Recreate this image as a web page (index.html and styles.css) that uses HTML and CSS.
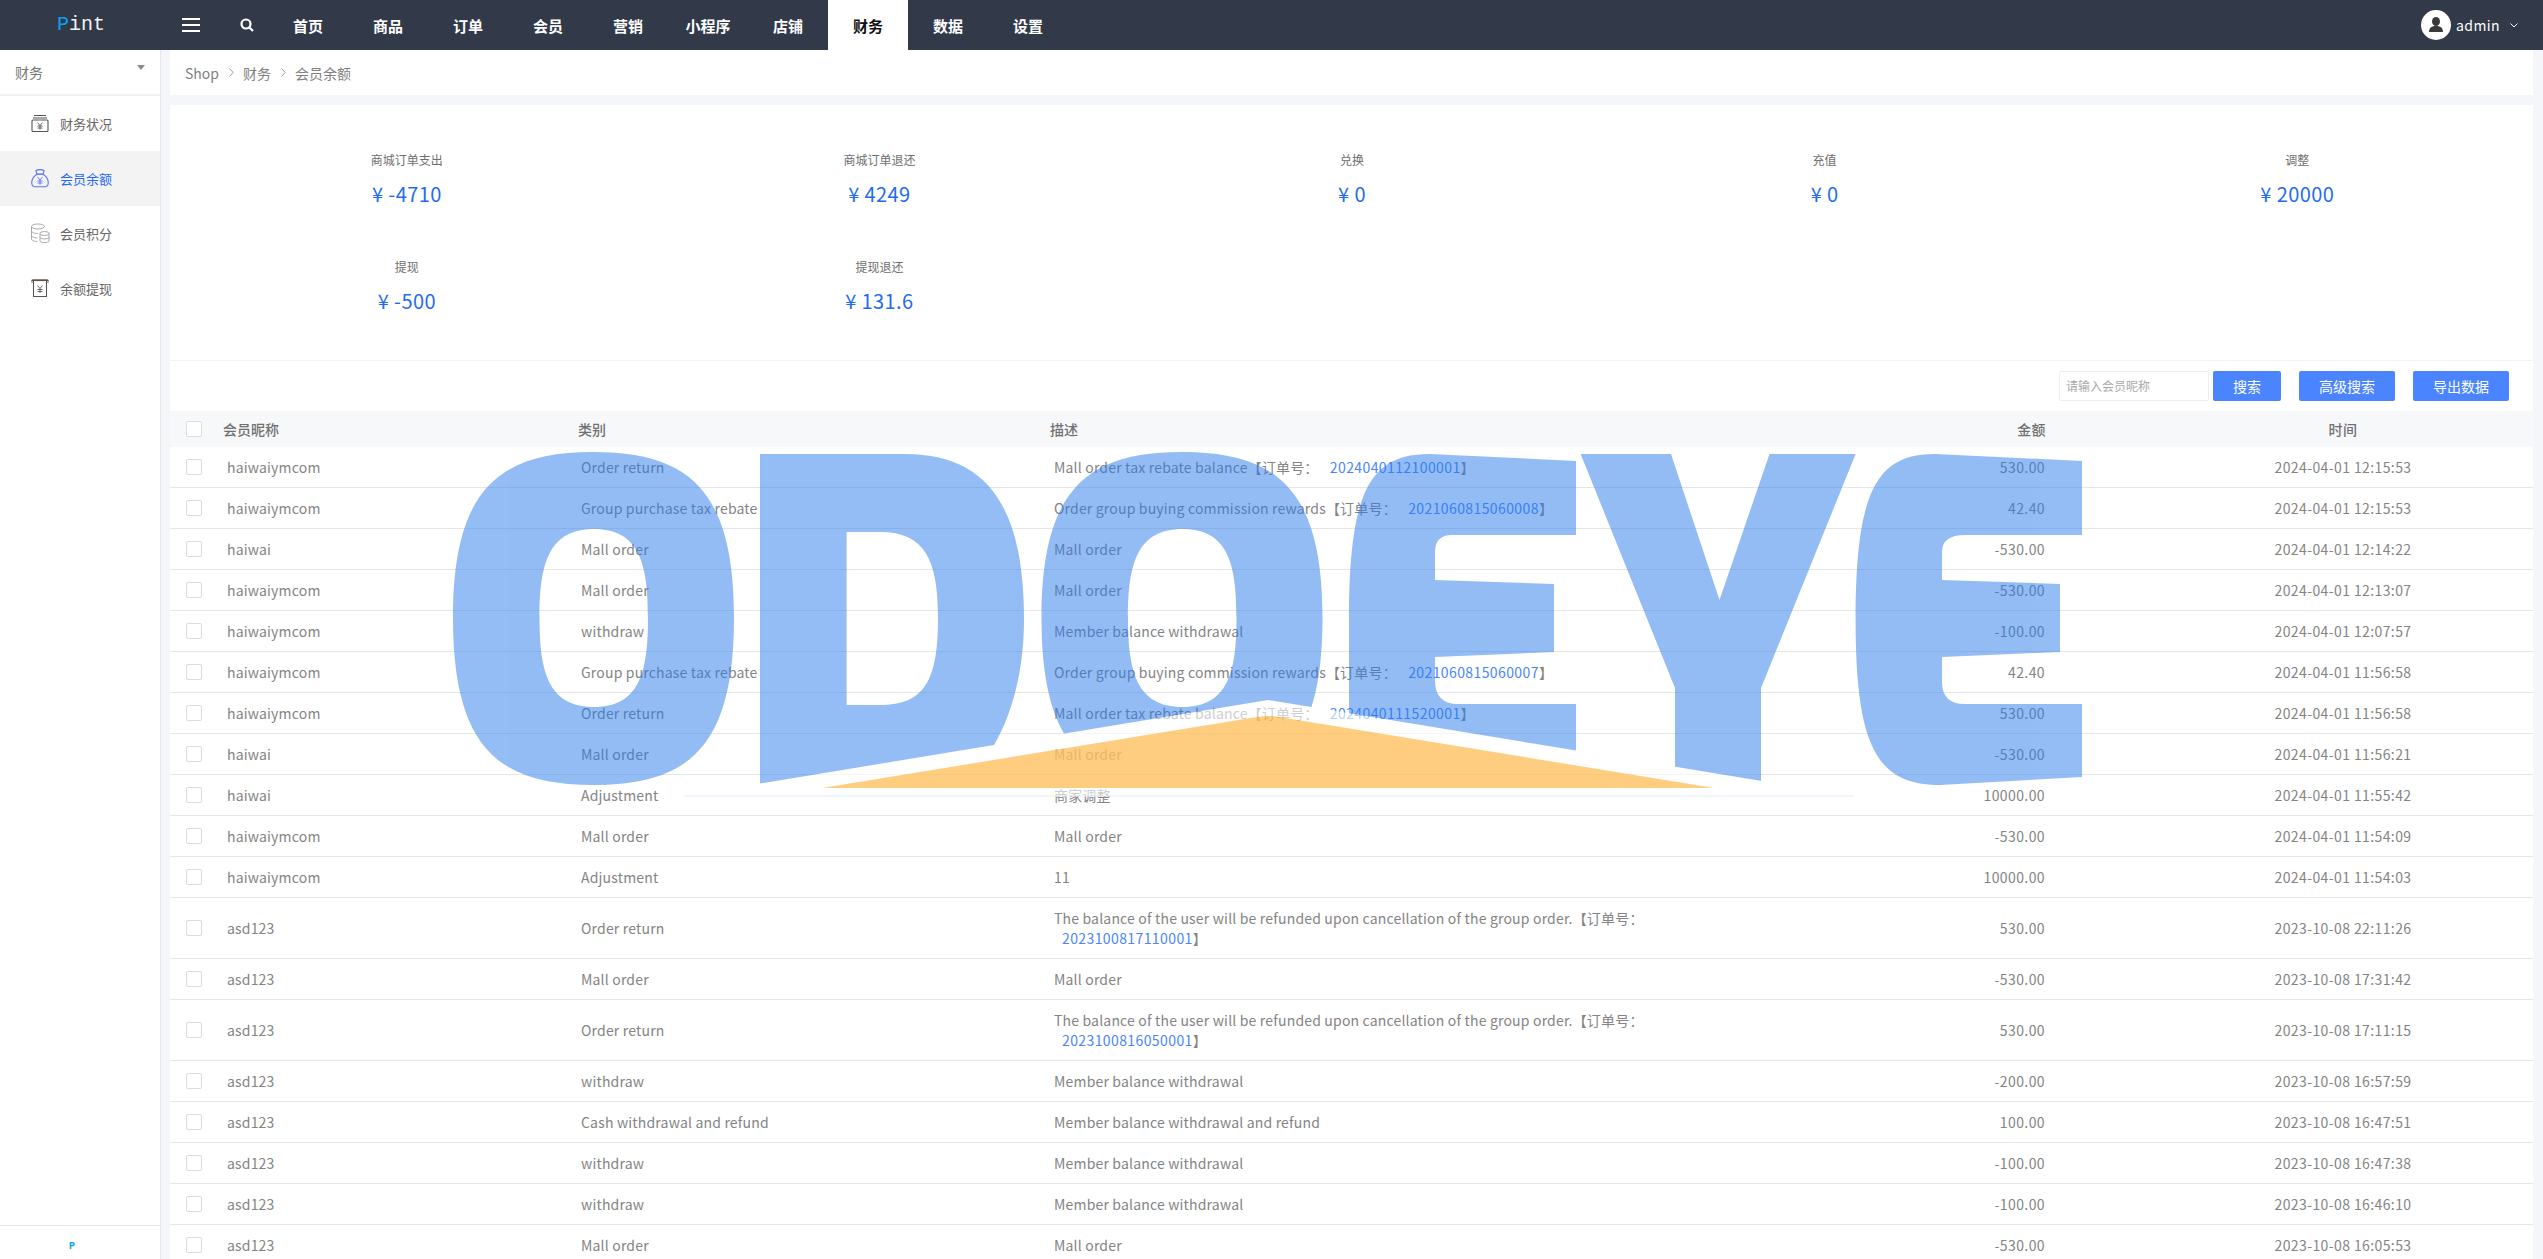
FILE: index.html
```html
<!DOCTYPE html>
<html lang="zh">
<head>
<meta charset="utf-8">
<title>会员余额</title>
<link rel="stylesheet" href="styles.css">
</head>
<body>
<header class="topbar">
  <div class="logo"><span class="logo-p">P</span>int</div>
  <div class="burger"><i></i><i></i><i></i></div>
  <svg class="search-ic" viewBox="0 0 14 14"><circle cx="6" cy="6" r="4.5"/><path d="M9.5 9.5 13 13"/></svg>
  <nav class="nav">
    <a>首页</a><a>商品</a><a>订单</a><a>会员</a><a>营销</a><a>小程序</a><a>店铺</a><a class="on">财务</a><a>数据</a><a>设置</a>
  </nav>
  <div class="user">
    <svg class="avatar" viewBox="0 0 30 30"><circle cx="15" cy="15" r="15" fill="#fff"/><ellipse cx="15" cy="11.5" rx="4" ry="4.6" fill="#3a3a3a"/><path d="M8 22c0-4.5 3-6 7-6s7 1.500 7 6z" fill="#3a3a3a"/></svg>
    <span class="uname">admin</span>
    <svg class="chev" viewBox="0 0 8 5"><path d="M.5.5 4 4 7.500.5"/></svg>
  </div>
</header>
<div class="body">
  <aside class="side">
    <div class="side-head"><span>财务</span><i class="caret"></i></div>
    <ul class="menu">
      <li>
        <svg class="mi" viewBox="0 0 20 20"><g fill="none" stroke="#555" stroke-width="1.100"><path d="M4 2.500h12M3 5h14"/><rect x="2" y="7" width="16" height="11.500" rx="1"/><path d="M7.500 9.500 10 12.500l2.500-3M10 12.500v4M7.500 13h5M7.500 15h5" stroke-width=".9"/></g></svg>
        <span>财务状况</span>
      </li>
      <li class="act">
        <svg class="mi" viewBox="0 0 20 20"><g fill="none" stroke="#5b76ee" stroke-width="1.100"><path d="M7 6 5.800 2.800c1.500-1.600 6.900-1.600 8.400 0L13 6z"/><path d="M7 6.300C3.500 8.500 1.500 12 1.800 15.500c.2 2 1.500 3.300 3.500 3.300h9.400c2 0 3.300-1.300 3.500-3.300.3-3.500-1.700-7-5.200-9.200z"/><path d="M7.500 9 10 12l2.500-3M10 12v4.500M7.500 13h5M7.500 15h5" stroke-width=".9"/></g></svg>
        <span>会员余额</span>
      </li>
      <li>
        <svg class="mi" viewBox="0 0 20 20"><g fill="none" stroke="#a9a9a9" stroke-width="1"><ellipse cx="8" cy="3.500" rx="6.500" ry="2.500"/><path d="M1.500 3.500v12.500c0 1.400 3 2.500 6 2.500M1.500 8c0 1.400 3 2.500 6.500 2.500M1.500 12.500c0 1.400 3 2.300 6 2.500"/><ellipse cx="14.500" cy="10.500" rx="4.500" ry="2"/><path d="M10 10.500v7.500c0 1 2 1.700 4.500 1.700s4.500-.7 4.500-1.700v-7.500M10 14.200c0 1 2 1.700 4.500 1.700s4.500-.7 4.500-1.700"/></g></svg>
        <span>会员积分</span>
      </li>
      <li>
        <svg class="mi" viewBox="0 0 20 20"><g fill="none" stroke="#555" stroke-width="1.100"><path d="M2 5V2.500q0-1 1-1h14q1 0 1 1V5" stroke="#9a8468"/><path d="M1.500 2.500h17"/><path d="M3.500 3v15.500h13V3"/><path d="M7.500 7.500 10 10.500l2.500-3M10 10.500v4.500M7.500 11.500h5M7.500 13.500h5" stroke-width=".9"/></g></svg>
        <span>余额提现</span>
      </li>
    </ul>
    <div class="side-foot"><b>P</b></div>
  </aside>
  <main class="main">
    <div class="crumbs">
      <span>Shop</span>
      <svg class="sep" viewBox="0 0 5 9"><path d="M.5.500 4.200 4.500.5 8.500"/></svg>
      <span>财务</span>
      <svg class="sep" viewBox="0 0 5 9"><path d="M.5.500 4.200 4.500.5 8.500"/></svg>
      <span>会员余额</span>
    </div>
    <section class="panel">
      <div class="stats">
        <div class="stat"><p>商城订单支出</p><strong>¥ -4710</strong></div>
        <div class="stat"><p>商城订单退还</p><strong>¥ 4249</strong></div>
        <div class="stat"><p>兑换</p><strong>¥ 0</strong></div>
        <div class="stat"><p>充值</p><strong>¥ 0</strong></div>
        <div class="stat"><p>调整</p><strong>¥ 20000</strong></div>
        <div class="stat"><p>提现</p><strong>¥ -500</strong></div>
        <div class="stat"><p>提现退还</p><strong>¥ 131.6</strong></div>
      </div>
      <div class="tools">
        <div class="fake-input">请输入会员昵称</div>
        <button class="btn btn-search">搜索</button>
        <button class="btn btn-wide">高级搜索</button>
        <button class="btn btn-wide">导出数据</button>
      </div>
      <table class="grid">
        <colgroup><col class="c1"><col class="c2"><col class="c3"><col class="c4"><col class="c5"><col class="c6"></colgroup>
        <thead>
          <tr><th class="ck"><i class="box"></i></th><th>会员昵称</th><th>类别</th><th>描述</th><th class="amt">金额</th><th class="tm">时间</th></tr>
        </thead>
        <tbody>
          <tr><td class="ck"><i class="box"></i></td><td>haiwaiymcom</td><td>Order return</td><td>Mall order tax rebate balance【订单号： <a>2024040112100001</a>】</td><td class="amt">530.00</td><td class="tm">2024-04-01 12:15:53</td></tr>
          <tr><td class="ck"><i class="box"></i></td><td>haiwaiymcom</td><td>Group purchase tax rebate</td><td>Order group buying commission rewards【订单号： <a>2021060815060008</a>】</td><td class="amt">42.40</td><td class="tm">2024-04-01 12:15:53</td></tr>
          <tr><td class="ck"><i class="box"></i></td><td>haiwai</td><td>Mall order</td><td>Mall order</td><td class="amt">-530.00</td><td class="tm">2024-04-01 12:14:22</td></tr>
          <tr><td class="ck"><i class="box"></i></td><td>haiwaiymcom</td><td>Mall order</td><td>Mall order</td><td class="amt">-530.00</td><td class="tm">2024-04-01 12:13:07</td></tr>
          <tr><td class="ck"><i class="box"></i></td><td>haiwaiymcom</td><td>withdraw</td><td>Member balance withdrawal</td><td class="amt">-100.00</td><td class="tm">2024-04-01 12:07:57</td></tr>
          <tr><td class="ck"><i class="box"></i></td><td>haiwaiymcom</td><td>Group purchase tax rebate</td><td>Order group buying commission rewards【订单号： <a>2021060815060007</a>】</td><td class="amt">42.40</td><td class="tm">2024-04-01 11:56:58</td></tr>
          <tr><td class="ck"><i class="box"></i></td><td>haiwaiymcom</td><td>Order return</td><td>Mall order tax rebate balance【订单号： <a>2024040111520001</a>】</td><td class="amt">530.00</td><td class="tm">2024-04-01 11:56:58</td></tr>
          <tr><td class="ck"><i class="box"></i></td><td>haiwai</td><td>Mall order</td><td>Mall order</td><td class="amt">-530.00</td><td class="tm">2024-04-01 11:56:21</td></tr>
          <tr><td class="ck"><i class="box"></i></td><td>haiwai</td><td>Adjustment</td><td>商家调整</td><td class="amt">10000.00</td><td class="tm">2024-04-01 11:55:42</td></tr>
          <tr><td class="ck"><i class="box"></i></td><td>haiwaiymcom</td><td>Mall order</td><td>Mall order</td><td class="amt">-530.00</td><td class="tm">2024-04-01 11:54:09</td></tr>
          <tr><td class="ck"><i class="box"></i></td><td>haiwaiymcom</td><td>Adjustment</td><td>11</td><td class="amt">10000.00</td><td class="tm">2024-04-01 11:54:03</td></tr>
          <tr><td class="ck"><i class="box"></i></td><td>asd123</td><td>Order return</td><td>The balance of the user will be refunded upon cancellation of the group order.【订单号： <a>2023100817110001</a>】</td><td class="amt">530.00</td><td class="tm">2023-10-08 22:11:26</td></tr>
          <tr><td class="ck"><i class="box"></i></td><td>asd123</td><td>Mall order</td><td>Mall order</td><td class="amt">-530.00</td><td class="tm">2023-10-08 17:31:42</td></tr>
          <tr><td class="ck"><i class="box"></i></td><td>asd123</td><td>Order return</td><td>The balance of the user will be refunded upon cancellation of the group order.【订单号： <a>2023100816050001</a>】</td><td class="amt">530.00</td><td class="tm">2023-10-08 17:11:15</td></tr>
          <tr><td class="ck"><i class="box"></i></td><td>asd123</td><td>withdraw</td><td>Member balance withdrawal</td><td class="amt">-200.00</td><td class="tm">2023-10-08 16:57:59</td></tr>
          <tr><td class="ck"><i class="box"></i></td><td>asd123</td><td>Cash withdrawal and refund</td><td>Member balance withdrawal and refund</td><td class="amt">100.00</td><td class="tm">2023-10-08 16:47:51</td></tr>
          <tr><td class="ck"><i class="box"></i></td><td>asd123</td><td>withdraw</td><td>Member balance withdrawal</td><td class="amt">-100.00</td><td class="tm">2023-10-08 16:47:38</td></tr>
          <tr><td class="ck"><i class="box"></i></td><td>asd123</td><td>withdraw</td><td>Member balance withdrawal</td><td class="amt">-100.00</td><td class="tm">2023-10-08 16:46:10</td></tr>
          <tr><td class="ck"><i class="box"></i></td><td>asd123</td><td>Mall order</td><td>Mall order</td><td class="amt">-530.00</td><td class="tm">2023-10-08 16:05:53</td></tr>
        </tbody>
      </table>
    </section>
  </main>
</div>
<svg class="mark" viewBox="0 0 2543 1259" aria-hidden="true">
  <defs>
    <clipPath id="cut"><polygon points="0,0 2543,0 2543,1259 1854,1259 1854,796 1268,700 684,796 684,1259 0,1259"/></clipPath>
  </defs>
  <path class="halo" d="M684 796 1268 700 1854 796z"/>
  <path class="halo-line" d="M684 796H1854"/>
  <g class="letters" clip-path="url(#cut)">
    <path fill-rule="evenodd" d="M453 618C453 490 498 452 593 452C689 452 734 490 734 618C734 747 689 785 593 785C498 785 453 747 453 618ZM539.500 618C539.500 565 548 529 594 529C640 529 648 565 648 618C648 671 640 707 594 707C548 707 539.500 671 539.500 618Z"/>
    <path fill-rule="evenodd" d="M760 454H905C990 454 1024 510 1024 620C1024 670 1012 715 994 745V790H760ZM846.600 532H880C925 532 938 560 938 618C938 680 925 705 880 705H846.600Z"/>
    <path fill-rule="evenodd" d="M1041.500 618C1041.500 490 1086.500 452 1181.500 452C1277.500 452 1322.500 490 1322.500 618C1322.500 747 1277.500 785 1181.500 785C1086.500 785 1041.500 747 1041.500 618ZM1128 618C1128 565 1136.500 529 1182.500 529C1228.500 529 1236.500 565 1236.500 618C1236.500 671 1228.500 707 1182.500 707C1136.500 707 1128 671 1128 618Z"/>
    <path d="M1349 620C1349 490 1370 454 1430 454L1576 461V535H1452Q1435 535 1435 552V580L1554 584V652L1435 657V680Q1435 704 1458 704H1576V790H1349Z"/>
    <path d="M1580.600 454H1671L1719.500 600L1769.500 454H1855.600L1761 688V790H1675V688Z"/>
    <path d="M1855.600 620C1855.600 490 1877 454 1935 454L2082 461V535H1965Q1942 535 1942 552V580L2060 584V652L1942 657V682Q1942 704 1965 704H2082V777L1940 785C1877 785 1855.600 747 1855.600 620Z"/>
  </g>
  <path class="roof" d="M822 788 1257 717Q1268 715 1279 717L1714 788z"/>
</svg>
</body>
</html>
```
FILE: styles.css
```css
* { box-sizing: border-box; }
html, body { margin: 0; height: 100%; overflow: hidden; }
body {
  font-family: "Noto Sans CJK SC", "Noto Sans", sans-serif;
  font-size: 14px;
  color: #777;
  background: #f5f6fa;
  position: relative;
}
.topbar { height: 50px; background: #323949; display: flex; align-items: center; position: relative; }
.logo { width: 182px; padding-left: 57px; font: 20px/28px "Liberation Mono", monospace; color: #f2f2f2; }
.logo-p { color: #0d9ff0; }
.burger { width: 18px; height: 14px; display: flex; flex-direction: column; justify-content: space-between; }
.burger i { display: block; height: 2px; background: #fff; }
.search-ic { width: 14px; height: 14px; margin-left: 40px; fill: none; stroke: #fff; stroke-width: 2.200; }
.nav { display: flex; margin-left: 14px; height: 50px; }
.nav a { width: 80px; display: flex; align-items: center; justify-content: center; color: #fff; font-size: 15px; font-weight: 700; }
.nav a.on { background: #fff; color: #111; }
.user { margin-left: auto; display: flex; align-items: center; padding-right: 25px; }
.avatar { width: 30px; height: 30px; }
.uname { color: #fff; font-size: 14px; margin-left: 5px; letter-spacing: .4px; }
.chev { width: 8px; height: 5px; margin-left: 10px; fill: none; stroke: #fff; stroke-width: 1; }
.body { display: flex; height: 1209px; }
.side { width: 161px; background: #fff; border-right: 1px solid #e8e8ea; display: flex; flex-direction: column; }
.side-head { height: 46px; border-bottom: 2px solid #f2f2f2; padding: 0 15px; display: flex; align-items: center; justify-content: space-between; font-size: 14px; color: #777; }
.caret { width: 0; height: 0; border: 4px solid transparent; border-top: 5px solid #8c8c8c; border-bottom: 0; margin-top: -9px; }
.menu { list-style: none; margin: 0; padding: 0; flex: 1; }
.menu li { height: 55px; padding: 0 0 1px 30px; display: flex; align-items: center; gap: 10px; font-size: 13px; color: #666; }
.menu li.act { background: #f3f3f4; color: #2468f2; }
.mi { width: 20px; height: 20px; flex: none; }
.side-foot { height: 34px; border-top: 1px solid #e6e6e6; display: flex; align-items: center; justify-content: center; padding: 8px 16px 0 0; }
.side-foot b { font: 700 10px/10px "Liberation Mono", monospace; color: #0d9ff0; }
.main { flex: 1; padding: 0 10px 0 9px; min-width: 0; }
.crumbs { height: 45px; margin-bottom: 10px; background: #fff; padding-left: 15px; display: flex; align-items: center; gap: 8.500px; font-size: 14px; color: #808080; }
.sep { width: 5px; height: 9px; fill: none; stroke: #999; stroke-width: 1; margin: 0 1px; }
.panel { background: #fff; }
.stats { display: grid; grid-template-columns: repeat(5, 1fr); padding: 20px 0 21px; border-bottom: 1px solid #f2f2f2; height: 256px; grid-auto-rows: 107px; }
.stat { padding: 25px 0 0 1px; text-align: center; }
.stat p { margin: 0 0 10px; font-size: 12px; line-height: 20px; color: #6e6e6e; }
.stat strong { display: block; font-weight: 400; font-size: 20px; line-height: 28px; letter-spacing: .4px; color: #1f6cf0; }
.tools { height: 50px; display: flex; justify-content: flex-end; align-items: flex-start; padding: 10px 24px 0 0; }
.fake-input { width: 150px; height: 30px; border: 1px solid #eee; border-radius: 2px; padding-left: 6px; font-size: 12px; line-height: 28px; color: #aaa; }
.btn { height: 30px; border: 0; border-radius: 2px; background: #4a85ff; color: #fff; font: 14px "Noto Sans CJK SC", sans-serif; padding: 0; }
.btn-search { width: 68px; margin-left: 4px; }
.btn-wide { width: 96px; margin-left: 18px; }
.grid { width: 100%; table-layout: fixed; border-collapse: separate; border-spacing: 0; }
.c1 { width: 43px; }
.c2 { width: 355px; }
.c3 { width: 472px; }
.c4 { width: 620px; }
.c5 { width: 493px; }
.c6 { width: 380px; }
.grid th { height: 36px; padding: 0 0 0 10px; background: #f7f8fa; font-size: 14px; font-weight: 500; color: #707070; text-align: left; }
.grid td { padding: 10px 0 10px 14px; line-height: 20px; border-bottom: 1px solid #e6e6e6; color: #848484; vertical-align: middle; letter-spacing: .18px; }
.grid td:nth-child(3) { padding-left: 13px; }
.grid .ck { padding: 0 0 0 16px; }
.grid .amt { text-align: right; padding: 10px 108px 10px 0; letter-spacing: .4px; }
.grid th.amt { padding: 0 107px 0 0; }
.grid .tm { text-align: center; padding: 10px 0; letter-spacing: .4px; }
.grid th.tm { padding: 0; }
.grid a { color: #4a85ff; margin-left: 8px; letter-spacing: .4px; }
.box { display: block; width: 16px; height: 16px; border: 1px solid #dcdcdc; border-radius: 2px; background: #fff; }
.mark { position: absolute; left: 0; top: 0; width: 2543px; height: 1259px; pointer-events: none; }
.letters { fill: #297beb; opacity: .5; }
.halo { fill: #fff; opacity: .6; }
.halo-line { stroke: #e4edfb; stroke-width: 1; fill: none; }
.roof { fill: #ff9b00; opacity: .5; }
```
